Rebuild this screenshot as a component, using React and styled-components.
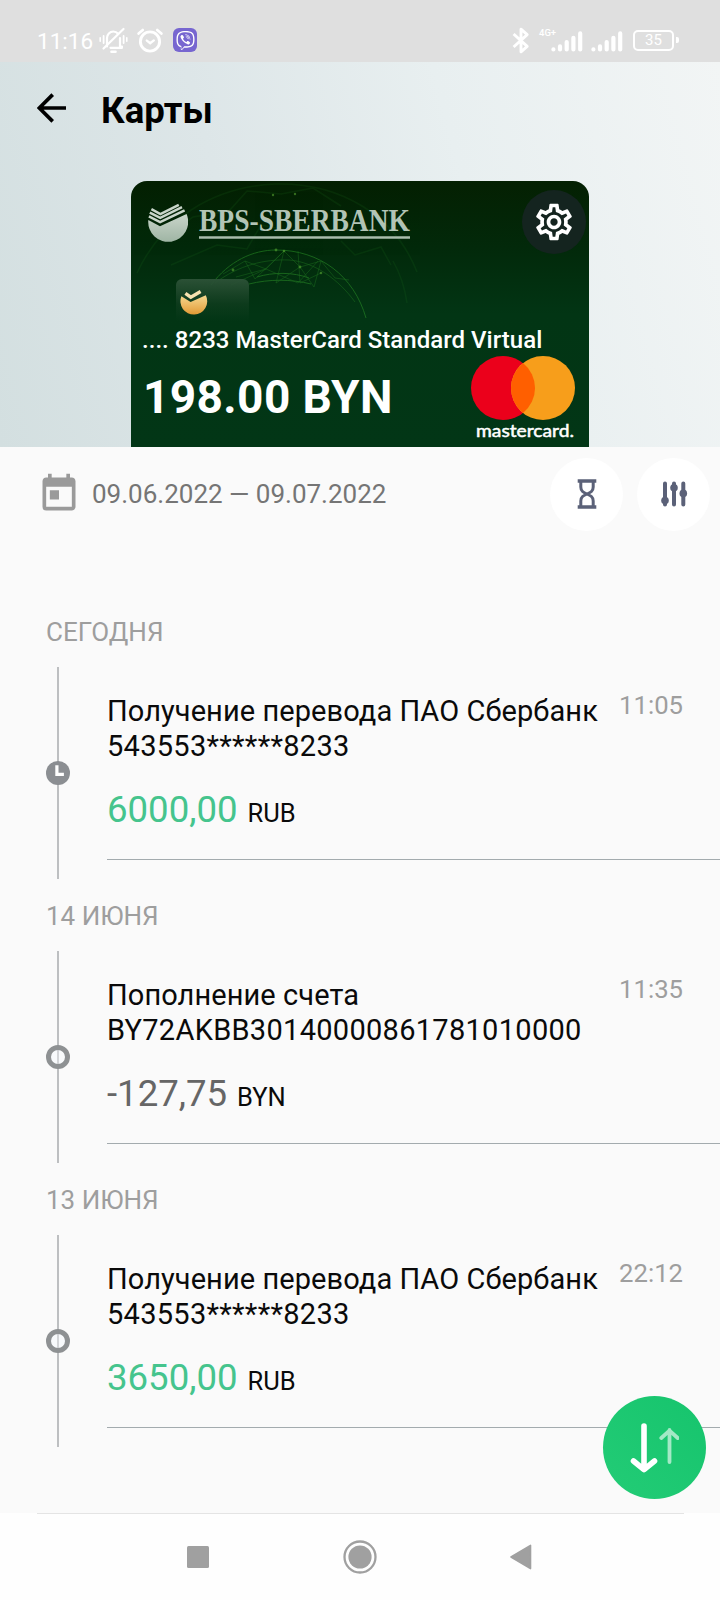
import React from 'react'
import styled, { createGlobalStyle } from "styled-components";
import { MdToday, MdOutlineSettings } from 'react-icons/md'
import { FaViber } from 'react-icons/fa'

const operations = [
  {
    day: 'СЕГОДНЯ',
    title: 'Получение перевода ПАО Сбербанк',
    account: '543553******8233',
    amount: '6000,00',
    currency: 'RUB',
    time: '11:05',
    income: true,
    pending: true,
  },
  {
    day: '14 ИЮНЯ',
    title: 'Пополнение счета',
    account: 'BY72AKBB30140000861781010000',
    amount: '-127,75',
    currency: 'BYN',
    time: '11:35',
  },
  {
    day: '13 ИЮНЯ',
    title: 'Получение перевода ПАО Сбербанк',
    account: '543553******8233',
    amount: '3650,00',
    currency: 'RUB',
    time: '22:12',
    income: true,
  },
]

const BellOff = () => (
  <svg width="29" height="27" viewBox="0 0 29 27" fill="none" stroke="#fff" strokeWidth="2.2" strokeLinecap="round">
    <path d="M8 19.5V11c0-3.6 2.8-6.5 6.3-6.5 2 0 3.6.8 4.8 2.2M21 11v8.5h2M11.5 20.8H23" />
    <path d="M24.5 2 4.5 21.5" />
    <path d="M12.5 24.8h4" strokeWidth="2.6" />
    <path d="M4.6 9v7M24.6 9v7" strokeWidth="1.8" />
    <path d="M1.2 10.8v3.4M27.8 10.8v3.4" strokeWidth="1.6" />
  </svg>
)

const Alarm = () => (
  <svg width="26" height="25" viewBox="0 0 26 25" fill="none" stroke="#fff" strokeLinecap="round">
    <circle cx="13" cy="13.5" r="9.6" strokeWidth="2.9" />
    <path d="m9.8 12.6 3.4 2.6 3.6-2.8" strokeWidth="2.4" />
    <path d="M1.6 5.6 5.8 2M24.4 5.6 20.2 2" strokeWidth="2.6" />
  </svg>
)

const Bluetooth = () => (
  <svg width="18" height="27" viewBox="0 0 18 27" fill="none" stroke="#fff" strokeWidth="2.9" strokeLinejoin="round">
    <path d="M1.6 7 15.2 19.4 9 24.8V2.2l6.2 5.4L1.6 20" />
  </svg>
)

const Signal = () => (
  <svg width="32" height="21" viewBox="0 0 32 21" stroke="#fff" strokeWidth="4.2" strokeLinecap="round">
    <path d="M2.4 18.4v.1M9 15.4v3.1M15.7 11v7.5M22.4 6.8v11.7M29.2 2.4v16.1" />
  </svg>
)

const SberMark = () => (
  <svg width="40" height="40" viewBox="0 0 40 40">
    <defs>
      <linearGradient id="silver" x1="0" y1="0" x2="0" y2="1">
        <stop offset="0" stopColor="#c9d5ca" />
        <stop offset="1" stopColor="#9fb5a4" />
      </linearGradient>
    </defs>
    <path d="M.3 18 12 24.3 38.6 12A20 20 0 1 1 .3 18Z" fill="url(#silver)" />
    <path d="M3.4 7.2 12.4 12 30.8 2.8M1.8 10.7l10.4 5.2L34 5.2M.9 14.4l11.2 5.7L36.6 8.4" fill="none" stroke="#c9d5ca" strokeWidth="2.5" />
  </svg>
)

const Wordmark = () => (
  <WordmarkSvg width="222" height="46" viewBox="0 0 222 46">
    <text x="0" y="32" textLength="211" lengthAdjust="spacingAndGlyphs" fontFamily="'Liberation Serif', serif" fontWeight="700" fontSize="32" fill="#b2c4b5">BPS-SBERBANK</text>
    <path d="M0 38.5h211" stroke="#a9bdac" strokeWidth="2.6" />
  </WordmarkSvg>
)

const Coin = () => (
  <svg width="28" height="28" viewBox="0 0 28 28">
    <defs>
      <linearGradient id="gold" x1="0" y1="0" x2="0" y2="1">
        <stop offset="0" stopColor="#f6d890" />
        <stop offset="1" stopColor="#e29a35" />
      </linearGradient>
    </defs>
    <path d="M1.4 8.2 10.6 14 25.8 7.2A13.4 13.4 0 1 1 1.4 8.2Z" fill="url(#gold)" />
    <path d="m5.4 5.4 5.4 3.8 9.8-5.7" fill="none" stroke="#f8e2b0" strokeWidth="3.4" />
  </svg>
)

// network sphere printed on the card
const Globe = () => (
  <GlobeSvg viewBox="0 0 458 266" fill="none" stroke="#2f9c2a">
    <g strokeWidth="1" opacity=".5">
      <path d="M80 104C98 80 122 69 145 69c44 0 78 26 90 68" />
      <path d="M84 102c24-18 50-24 74-23 26 2 50 20 66 42" opacity=".6" />
      <path d="M92 93l22-13 21 8 18-18 16 16 21-6 14 17 14 2M105 96l30-8 32 14 20-22M114 80l10 18 29-28-8 32 24-16 14 20 7-26M100 104l35-16M167 70l2 32 21-10" opacity=".55" />
      <path d="M118 103c20-5 42-5 62 0M126 96c16-5 36-5 52 1" />
    </g>
    <g opacity=".1" strokeWidth="1.5">
      <path d="M6 92C30 40 80 6 144 3c66-2 120 32 142 88" />
      <path d="M30 60 62 36l36-6 18-20 34 3 32-6 28 18M40 84l46-20 30 4 14-24 30 6M210 60l14 14 26-8 10 18" />
      <path d="M262 80c8 14 12 28 14 42" />
    </g>
    <g fill="#5fae35" stroke="none" opacity=".55">
      <circle cx="102" cy="89" r="1.4" /><circle cx="145" cy="69" r="1.4" /><circle cx="169" cy="86" r="1.4" />
      <circle cx="153" cy="70" r="1.3" /><circle cx="190" cy="92" r="1.3" /><circle cx="164" cy="13" r="1.2" /><circle cx="142" cy="14" r="1.2" />
    </g>
  </GlobeSvg>
)

const MasterCard = () => (
  <svg width="110" height="88" viewBox="0 0 110 88">
    <circle cx="32" cy="32" r="32" fill="#eb001b" />
    <circle cx="72" cy="32" r="32" fill="#f79e1b" />
    <path d="M52 7a32 32 0 0 1 0 50 32 32 0 0 1 0-50Z" fill="#ff5f00" />
    <text x="5" y="80.5" textLength="98" lengthAdjust="spacingAndGlyphs" fontFamily="Lato, sans-serif" fontSize="17" fill="#fff" stroke="#fff" strokeWidth=".5">mastercard.</text>
  </svg>
)

const Hourglass = () => (
  <svg width="20" height="30" viewBox="0 0 20 30" fill="none" stroke="#5b6178">
    <path d="M.7 2h18.6M.7 28h18.6" strokeWidth="3.6" />
    <path d="M3.8 3v5c0 4.2 2.6 5.4 6.2 7s6.2 2.8 6.2 7v5M16.2 3v5c0 4.2-2.6 5.4-6.2 7s-6.2 2.8-6.2 7v5" strokeWidth="3" />
  </svg>
)

const Sliders = () => (
  <svg width="28" height="28" viewBox="0 0 28 28" stroke="#5b6178" strokeWidth="4" strokeLinecap="round">
    <path d="M5 3.4v21.2M14 3.4v21.2M23.3 3.4v21.2" />
    <g fill="#5b6178" stroke="none">
      <circle cx="5" cy="20.5" r="3.8" /><circle cx="14" cy="7.8" r="3.8" /><circle cx="23.3" cy="13.4" r="3.8" />
    </g>
  </svg>
)

const Transfer = () => (
  <svg width="50" height="52" viewBox="0 0 50 52" fill="none" stroke="#fff" strokeLinecap="round" strokeLinejoin="round">
    <path d="M15 4v43M4.5 39 15 47.6 25.5 39" strokeWidth="5.6" />
    <path d="M40.5 40V8M32.3 16l8.2-7.4 8.2 7.4" strokeWidth="3.8" opacity=".6" />
  </svg>
)

const Operation = ({ item }) => (
  <Group>
    <Day>{item.day}</Day>
    <Entry>
      <Rail>
        <Marker $pending={item.pending}>
          {item.pending && (
            <svg width="24" height="24" viewBox="0 0 24 24" fill="none" stroke="#fff" strokeWidth="3.2">
              <path d="M10.9 4.2v9.2h7" />
            </svg>
          )}
        </Marker>
      </Rail>
      <Body>
        <Info>
          <Title>{item.title}</Title>
          <Account>{item.account}</Account>
          <Sum>
            <Amount $income={item.income}>{item.amount}</Amount>
            <Currency>{item.currency}</Currency>
          </Sum>
        </Info>
        <Time>{item.time}</Time>
      </Body>
    </Entry>
  </Group>
)

export default function App() {
  return (
    <Screen>
      <GlobalStyle />
      <StatusBar>
        <Clock>11:16</Clock>
        <BellOff />
        <Alarm />
        <ViberBadge><FaViber size={19} /></ViberBadge>
        <Spacer />
        <Bluetooth />
        <Network>
          <NetworkType>4G+</NetworkType>
          <Signal />
        </Network>
        <Signal />
        <Battery>35</Battery>
      </StatusBar>
      <Hero>
        <Header>
          <svg width="30" height="30" viewBox="0 0 30 30" fill="none" stroke="#000" strokeWidth="3.7">
            <path d="M29 15H2.5M15.7 1.6 2.3 15l13.4 13.4" />
          </svg>
          <PageTitle>Карты</PageTitle>
        </Header>
        <Card>
          <Globe />
          <CardTop>
            <SberMark />
            <Wordmark />
            <GearButton><MdOutlineSettings size={44} /></GearButton>
          </CardTop>
          <Chip><Coin /></Chip>
          <CardName>.... 8233 MasterCard Standard Virtual</CardName>
          <CardBottom>
            <Balance>198.00 BYN</Balance>
            <MasterCard />
          </CardBottom>
        </Card>
      </Hero>
      <Filters>
        <MdToday size={44} color="#9a9a9a" />
        <Period>09.06.2022 — 09.07.2022</Period>
        <RoundButton><Hourglass /></RoundButton>
        <RoundButton><Sliders /></RoundButton>
      </Filters>
      <List>
        {operations.map((item) => <Operation key={item.day} item={item} />)}
      </List>
      <Fab><Transfer /></Fab>
      <NavBar>
        <svg width="22" height="22"><rect width="22" height="22" rx="1.5" fill="#a0a0a0" /></svg>
        <svg width="34" height="34" viewBox="0 0 34 34">
          <circle cx="17" cy="17" r="15.5" fill="none" stroke="#a0a0a0" strokeWidth="2.3" />
          <circle cx="17" cy="17" r="11.6" fill="#a0a0a0" />
        </svg>
        <svg width="22" height="26" viewBox="0 0 22 26"><path d="M1 13 20.5 1.4v23.2Z" fill="#a0a0a0" stroke="#a0a0a0" strokeWidth="1.6" strokeLinejoin="round" /></svg>
      </NavBar>
    </Screen>
  )
}

const GlobalStyle = createGlobalStyle`
* {
    box-sizing: border-box;
}
body {
    margin: 0;
    background: #fafafa;
    font-family: Roboto, sans-serif;
}
svg {
    display: block;
    flex-shrink: 0;
}
`
const Screen = styled.div`
position: relative;
display: flex;
flex-direction: column;
width: 720px;
height: 1600px;
overflow: hidden;
background: #fafafa;
`
const StatusBar = styled.div`
display: flex;
align-items: center;
height: 62px;
padding: 18px 46px 0 37px;
background: #dfdfdf;
color: white;
`
const Clock = styled.span`
width: 62px;
font-size: 22.5px;
line-height: 26px;
margin-top: 1px;
& + svg {
    margin-right: 9px;
}
`
const ViberBadge = styled.span`
display: flex;
align-items: center;
justify-content: center;
width: 24px;
height: 24px;
margin-left: 10px;
border-radius: 6px;
background: #7766d0;
`
const Spacer = styled.div`
flex: 1;
`
const Network = styled.div`
position: relative;
margin: 2px 8px 0 21px;
& + svg {
    margin-top: 2px;
}
`
const NetworkType = styled.span`
position: absolute;
left: -12px;
top: -3px;
font-size: 9.5px;
font-weight: 500;
line-height: 10px;
`
const Battery = styled.div`
position: relative;
display: flex;
align-items: center;
justify-content: center;
width: 41px;
height: 21px;
margin-left: 10px;
border: 2.5px solid white;
border-radius: 5px;
font-size: 15px;
line-height: 16px;
&::after {
    content: '';
    position: absolute;
    right: -7px;
    top: 5px;
    width: 3px;
    height: 6px;
    border-radius: 0 2px 2px 0;
    background: white;
}
`
const Hero = styled.div`
height: 385px;
background: linear-gradient(75deg, #d3dfe0 0%, #dde6e8 35%, #e8eff0 65%, #f2f5f5 100%);
`
const Header = styled.div`
display: flex;
align-items: center;
height: 92px;
padding-left: 37px;
`
const PageTitle = styled.h1`
margin: 5px 0 0 34px;
font-size: 36.6px;
font-weight: 700;
line-height: 42px;
`
const Card = styled.div`
position: relative;
display: flex;
flex-direction: column;
width: 458px;
height: 266px;
margin: 27px 0 0 131px;
padding-top: 8px;
border-radius: 16px 16px 0 0;
overflow: hidden;
color: white;
background: linear-gradient(180deg, #042002 0%, #02290a 25%, #023514 50%, #023616 100%);
`
const GlobeSvg = styled.svg`
position: absolute;
inset: 0;
`
const WordmarkSvg = styled.svg`
overflow: visible;
`
const CardTop = styled.div`
position: relative;
display: flex;
align-items: center;
height: 64px;
padding: 2px 3px 0 17px;
gap: 11px;
`
const GearButton = styled.div`
display: flex;
align-items: center;
justify-content: center;
width: 64px;
height: 64px;
margin-left: auto;
border-radius: 50%;
background: #14241f;
`
const Chip = styled.div`
position: relative;
width: 73px;
height: 42px;
margin: 26px 0 0 45px;
padding: 9px 4px;
border-radius: 6px 6px 0 0;
background: linear-gradient(180deg, #2b5136 0%, #17422580 60%, #02331500 100%);
`
const CardName = styled.div`
position: relative;
margin: 5px 0 0 11px;
font-size: 24px;
font-weight: 500;
line-height: 28px;
letter-spacing: 0.03px;
white-space: nowrap;
`
const CardBottom = styled.div`
display: flex;
justify-content: space-between;
padding: 2px 8.5px 0 12px;
`
const Balance = styled.div`
margin-top: 14px;
font-size: 46px;
font-weight: 700;
line-height: 54px;
letter-spacing: 0.4px;
white-space: nowrap;
`
const Filters = styled.div`
display: flex;
align-items: center;
height: 94px;
padding: 0 10px 0 37px;
`
const Period = styled.div`
flex: 1;
margin-left: 11px;
font-size: 26px;
line-height: 30px;
color: #757575;
`
const RoundButton = styled.div`
display: flex;
align-items: center;
justify-content: center;
width: 73px;
height: 73px;
margin-left: 14px;
border-radius: 50%;
background: white;
`
const List = styled.div`
flex: 1;
padding-top: 76px;
`
const Group = styled.div`
height: 284px;
`
const Day = styled.div`
padding-left: 46px;
font-size: 26px;
line-height: 30px;
color: #9e9e9e;
`
const Entry = styled.div`
display: flex;
height: 212px;
margin-top: 20px;
`
const Rail = styled.div`
display: flex;
align-items: center;
justify-content: center;
width: 24px;
margin: 0 37px 0 46px;
background: linear-gradient(#bdbfc1, #bdbfc1) center / 2px 100% no-repeat;
`
const Marker = styled.div`
width: 24px;
height: 24px;
border: ${(props) => (props.$pending ? '0' : '5px solid #8e9193')};
border-radius: 50%;
background: ${(props) => (props.$pending ? '#8b8e92' : 'linear-gradient(#d3d5d8, #d3d5d8) center / 2px 100% no-repeat, #f8fafc')};
`
const Body = styled.div`
display: flex;
flex: 1;
justify-content: space-between;
height: 193px;
padding: 23px 37px 0 0;
border-bottom: 1px solid #a3abae;
`
const Info = styled.div`
padding-top: 4px;
`
const Title = styled.div`
font-size: 29px;
line-height: 34.5px;
letter-spacing: 0.08px;
white-space: nowrap;
color: #0a0a0a;
`
const Account = styled(Title)`
letter-spacing: 0.29px;
`
const Sum = styled.div`
display: flex;
align-items: baseline;
margin-top: 25px;
gap: 10px;
line-height: 44px;
`
const Amount = styled.span`
font-size: 36.6px;
color: ${(props) => (props.$income ? '#45c48d' : '#666')};
`
const Currency = styled.span`
font-size: 25.5px;
color: #0a0a0a;
`
const Time = styled.div`
font-size: 25.7px;
line-height: 30px;
color: #9e9e9e;
`
const Fab = styled.button`
position: absolute;
left: 602.5px;
top: 1396px;
display: flex;
align-items: center;
justify-content: center;
width: 103px;
height: 103px;
padding: 0;
border: 0;
border-radius: 50%;
background: linear-gradient(45deg, #23cc76, #16c46d);
`
const NavBar = styled.div`
display: flex;
align-items: center;
height: 87px;
padding: 0 0 0 187px;
gap: 133.5px;
background: linear-gradient(#e4e4e4, #e4e4e4) 37px 0 / 647px 1px no-repeat, #fefefe;
`
